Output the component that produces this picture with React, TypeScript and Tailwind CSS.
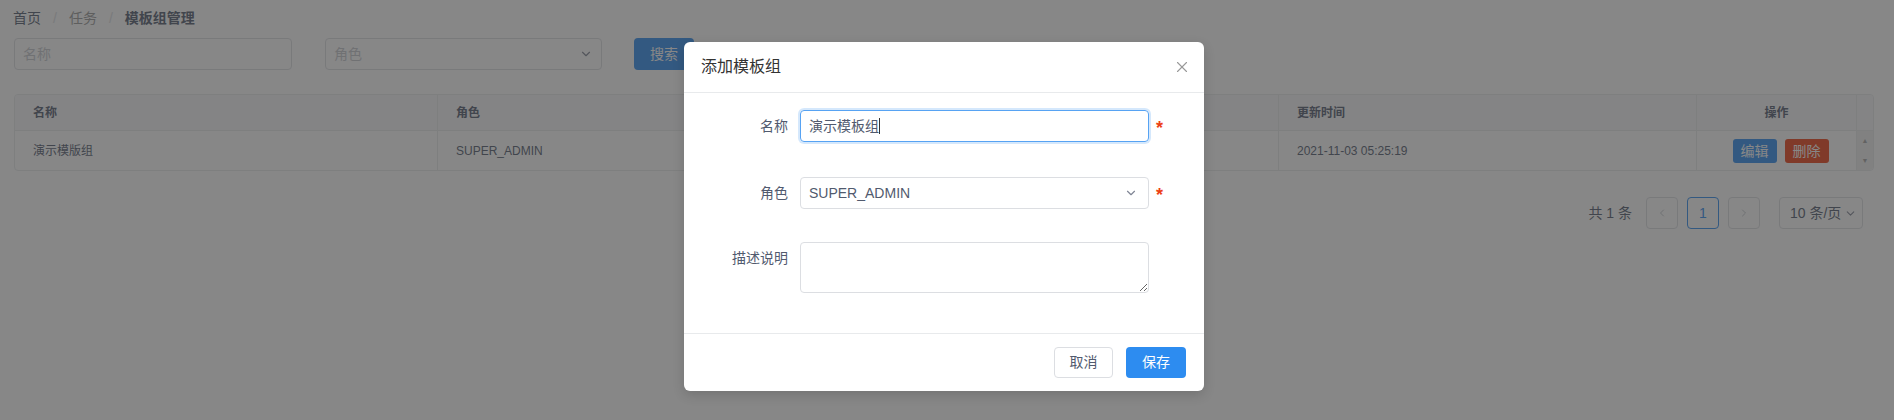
import { ChevronDown, ChevronLeft, ChevronRight, X } from "lucide-react";

const font = "font-['Liberation_Sans','Noto_Sans_CJK_SC',sans-serif]";

const Breadcrumb = () => (
  <div className="flex items-center h-[20px] text-[14px] leading-[20px]">
    <span className="text-[#515a6e]">首页</span>
    <span className="text-[#dcdee2] px-[12px]">/</span>
    <span className="text-[#999]">任务</span>
    <span className="text-[#dcdee2] px-[12px]">/</span>
    <span className="text-[#515a6e] font-bold">模板组管理</span>
  </div>
);

const SearchBar = () => (
  <div className="flex items-center mt-[10px] h-[32px]">
    <div className="w-[278px] h-[32px] border border-[#dcdee2] rounded-[4px] px-[8px] flex items-center text-[14px] text-[#c5c8ce]">
      名称
    </div>
    <div className="ml-[33px] w-[277px] h-[32px] border border-[#dcdee2] rounded-[4px] pl-[8px] pr-[8px] flex items-center justify-between text-[14px] text-[#c5c8ce]">
      <span>角色</span>
      <ChevronDown size={14} className="text-[#808695]" />
    </div>
    <button className="ml-[32px] w-[60px] h-[32px] rounded-[4px] bg-[#2d8cf0] text-white text-[14px]">
      搜索
    </button>
  </div>
);

const cols = [
  { title: "名称", w: "w-[422px]", value: "演示模版组" },
  { title: "角色", w: "w-[422px]", value: "SUPER_ADMIN" },
  { title: "创建时间", w: "w-[419px]", value: "2021-11-03 05:25:19" },
  { title: "更新时间", w: "w-[418px]", value: "2021-11-03 05:25:19" },
];

const Table = () => (
  <div className="mt-[24px] w-[1860px] border border-[#e8eaec] rounded-[4px] overflow-hidden text-[12px] text-[#515a6e]">
    <div className="flex h-[36px] bg-[#f8f8f9] border-b border-[#e8eaec]">
      {cols.map((c, i) => (
        <div
          key={c.title}
          className={`${c.w} flex items-center px-[18px] font-bold ${i > 0 ? "border-l border-[#e8eaec]" : ""}`}
        >
          {c.title}
        </div>
      ))}
      <div className="w-[160px] flex items-center justify-center font-bold border-l border-[#e8eaec]">
        操作
      </div>
      <div className="flex-1 border-l border-[#e8eaec]" />
    </div>
    <div className="flex h-[39px]">
      {cols.map((c, i) => (
        <div
          key={c.title}
          className={`${c.w} flex items-center px-[18px] ${i > 0 ? "border-l border-[#e8eaec]" : ""}`}
        >
          {c.value}
        </div>
      ))}
      <div className="w-[160px] flex items-center justify-center gap-[8px] border-l border-[#e8eaec] pl-[8px]">
        <button className="h-[24px] px-[8px] rounded-[3px] bg-[#2d8cf0] text-white text-[14px] leading-[24px]">
          编辑
        </button>
        <button className="h-[24px] px-[8px] rounded-[3px] bg-[#ed4014] text-white text-[14px] leading-[24px]">
          删除
        </button>
      </div>
      <div className="flex-1 bg-[#f1f1f1] border-l border-[#e8eaec] flex flex-col items-center justify-between py-[6px] text-[7px] text-[#a3a3a3] leading-none">
        <span>▲</span>
        <span>▼</span>
      </div>
    </div>
  </div>
);

const Pagination = () => (
  <div className="mt-[26px] w-[1849px] flex items-center justify-end text-[14px] text-[#515a6e]">
    <span className="mr-[14px]">共 1 条</span>
    <div className="w-[32px] h-[32px] border border-[#dcdee2] rounded-[4px] flex items-center justify-center text-[#c5c8ce]">
      <ChevronLeft size={12} />
    </div>
    <div className="ml-[9px] w-[32px] h-[32px] border border-[#2d8cf0] rounded-[4px] flex items-center justify-center text-[#2d8cf0]">
      1
    </div>
    <div className="ml-[9px] w-[32px] h-[32px] border border-[#dcdee2] rounded-[4px] flex items-center justify-center text-[#c5c8ce]">
      <ChevronRight size={12} />
    </div>
    <div className="ml-[19px] w-[84px] h-[32px] border border-[#dcdee2] rounded-[4px] flex items-center pl-[10px] gap-[3px]">
      <span>10 条/页</span>
      <ChevronDown size={13} className="text-[#808695]" />
    </div>
  </div>
);

const Required = () => (
  <span className="ml-[7px] h-[32px] text-[#ed4014] text-[18px] font-bold leading-[36px]">*</span>
);

const Modal = () => (
  <div className="absolute left-[684px] top-[42px] w-[520px] bg-white rounded-[6px] shadow-[0_4px_12px_rgba(0,0,0,0.15)]">
    <div className="h-[51px] border-b border-[#e8eaec] px-[17px] flex items-center justify-between">
      <span className="text-[16px] text-[#333]">添加模板组</span>
      <X size={18} strokeWidth={1.5} className="text-[#999] mr-[-4px]" />
    </div>
    <div className="pt-[17px] pb-[40px] pl-[20px] text-[14px] text-[#515a6e]">
      <div className="flex items-start h-[32px] mb-[35px]">
        <label className="w-[96px] pr-[12px] text-right leading-[32px]">名称</label>
        <div className="w-[349px] h-[32px] border border-[#57a3f3] rounded-[4px] px-[8px] flex items-center shadow-[0_0_0_2px_rgba(45,140,240,0.2)]">
          <span>演示模板组</span>
          <span className="w-px h-[16px] bg-[#333]" />
        </div>
        <Required />
      </div>
      <div className="flex items-start h-[32px] mb-[33px]">
        <label className="w-[96px] pr-[12px] text-right leading-[32px]">角色</label>
        <div className="w-[349px] h-[32px] border border-[#dcdee2] rounded-[4px] pl-[8px] pr-[10px] flex items-center justify-between">
          <span>SUPER_ADMIN</span>
          <ChevronDown size={14} className="text-[#808695]" />
        </div>
        <Required />
      </div>
      <div className="flex items-start">
        <label className="w-[96px] pr-[12px] text-right leading-[32px]">描述说明</label>
        <textarea className="w-[349px] h-[51px] border border-[#dcdee2] rounded-[4px] px-[8px] py-[4px] outline-none block" />
      </div>
    </div>
    <div className="border-t border-[#e8eaec] pt-[13px] pb-[13px] pr-[18px] flex justify-end gap-[13px] text-[14px]">
      <button className="w-[59px] h-[31px] border border-[#dcdee2] rounded-[4px] bg-white text-[#515a6e]">
        取消
      </button>
      <button className="w-[60px] h-[31px] rounded-[4px] bg-[#2d8cf0] text-white">
        保存
      </button>
    </div>
  </div>
);

export default function App() {
  return (
    <div className={`relative w-full h-[420px] bg-white overflow-hidden ${font}`}>
      <div className="pl-[14px] pt-[8px]">
        <div className="-ml-[1px]">
          <Breadcrumb />
        </div>
        <SearchBar />
        <Table />
        <Pagination />
      </div>
      <div className="absolute inset-0 bg-[rgba(55,55,55,0.6)]" />
      <Modal />
    </div>
  );
}
